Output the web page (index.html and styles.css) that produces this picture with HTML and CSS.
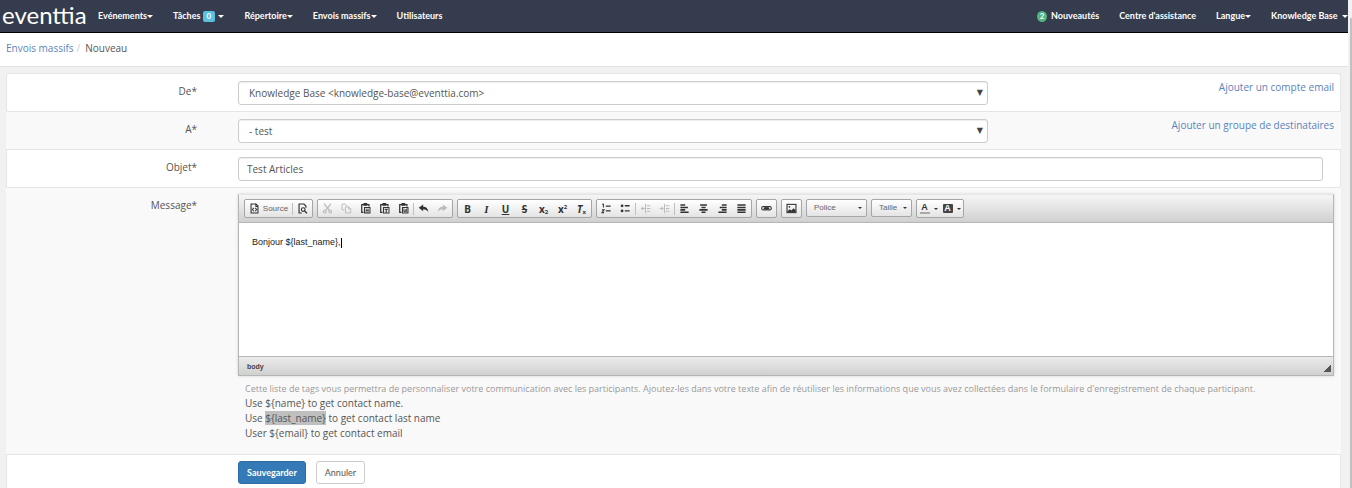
FILE: index.html
```
<!DOCTYPE html>
<html lang="fr">
<head>
  <meta charset="UTF-8"/>
  <meta name="viewport" content="width=device-width,initial-scale=1"/>
  <title>Nouveau - Envois massifs</title>
  <link rel="stylesheet" href="styles.css">
</head>
<body>

  <!-- Icon set -->
  <svg class="sprite" aria-hidden="true">
    <symbol id="i-source" viewBox="0 0 16 16"><path d="M3 1.5h7l3 3v10H3z" fill="none" stroke="currentColor" stroke-width="1.6"/><path d="M10 1v4h3M7 7L5 9.500l2 2.500M9 7l2 2.500L9 12" fill="none" stroke="currentColor" stroke-width="1.500"/></symbol>
    <symbol id="i-preview" viewBox="0 0 16 16"><path d="M7 14.500H3v-13h7l3 3V7" fill="none" stroke="currentColor" stroke-width="1.700"/><circle cx="9" cy="9.500" r="2.700" fill="none" stroke="currentColor" stroke-width="1.600"/><path d="M11 11.500l3.500 3.500" stroke="currentColor" stroke-width="2"/></symbol>
    <symbol id="i-cut" viewBox="0 0 16 16"><path d="M3 1l8 10M13 1L5 11" stroke="currentColor" stroke-width="2"/><circle cx="4" cy="12.500" r="2" fill="none" stroke="currentColor" stroke-width="1.700"/><circle cx="12" cy="12.500" r="2" fill="none" stroke="currentColor" stroke-width="1.700"/></symbol>
    <symbol id="i-copy" viewBox="0 0 16 16"><path d="M5 10H1.500V1.500H6L8.500 4M6.500 5.500H11l3 3v6H6.500z M11 5.500v3h3" fill="none" stroke="currentColor" stroke-width="1.400"/></symbol>
    <symbol id="i-paste" viewBox="0 0 16 16"><path d="M5 13.500H2.500v-11H13V5" fill="none" stroke="currentColor" stroke-width="1.800"/><path d="M5 0h5.500v4H5z" fill="currentColor"/><path d="M6.500 6.500h8v8h-8z" fill="none" stroke="currentColor" stroke-width="1.500"/><path d="M8 9h5M8 11h5M8 13h5" stroke="currentColor" stroke-width="1.200"/></symbol>
    <symbol id="i-pastetext" viewBox="0 0 16 16"><path d="M5 13.500H2.500v-11H13V5" fill="none" stroke="currentColor" stroke-width="1.800"/><path d="M5 0h5.500v4H5z" fill="currentColor"/><path d="M6.500 6.500h8v8h-8z" fill="none" stroke="currentColor" stroke-width="1.500"/><path d="M8 9h5M10.500 9v5" stroke="currentColor" stroke-width="1.600"/></symbol>
    <symbol id="i-pasteword" viewBox="0 0 16 16"><path d="M5 13.500H2.500v-11H13V5" fill="none" stroke="currentColor" stroke-width="1.800"/><path d="M5 0h5.500v4H5z" fill="currentColor"/><path d="M6.500 6.500h8v8h-8z" fill="none" stroke="currentColor" stroke-width="1.500"/><path d="M8.500 8v4.500h4V8M10.500 9v3" fill="none" stroke="currentColor" stroke-width="1.300"/></symbol>
    <symbol id="i-undo" viewBox="0 0 16 16"><path d="M1 7l6.500-5v3.300c4.500 0 7 2.700 7.500 7.700-2-2.800-4-4-7.500-4V12z" fill="currentColor"/></symbol>
    <symbol id="i-redo" viewBox="0 0 16 16"><path d="M15 7L8.500 2v3.300C4 5.300 1.500 8 1 13c2-2.800 4-4 7.500-4v3z" fill="currentColor"/></symbol>
    <symbol id="i-ol" viewBox="0 0 16 16"><path d="M3.500 1v5.500M2 2.500L3.500 1M1.500 10h3l-3 4h3" fill="none" stroke="currentColor" stroke-width="1.500"/><path d="M7 4.500h7M7 11.500h7" stroke="currentColor" stroke-width="2"/></symbol>
    <symbol id="i-ul" viewBox="0 0 16 16"><circle cx="3" cy="4" r="2" fill="currentColor"/><circle cx="3" cy="11.500" r="2" fill="currentColor"/><path d="M7 4h7M7 11.500h7" stroke="currentColor" stroke-width="2"/></symbol>
    <symbol id="i-outdent" viewBox="0 0 16 16"><path d="M8 1v14M10 4h5M10 8h5M10 12h5M3 8h4" stroke="currentColor" stroke-width="1.500"/><path d="M4.500 5v6L1 8z" fill="currentColor"/></symbol>
    <symbol id="i-indent" viewBox="0 0 16 16"><path d="M8 1v14M10 4h5M10 8h5M10 12h5M1 8h4" stroke="currentColor" stroke-width="1.500"/><path d="M3.500 5v6L7 8z" fill="currentColor"/></symbol>
    <symbol id="i-left" viewBox="0 0 16 16"><path d="M2 3h7M2 6.500h11M2 10h7M2 13.500h12" stroke="currentColor" stroke-width="2.300"/></symbol>
    <symbol id="i-center" viewBox="0 0 16 16"><path d="M3 3h10M5 6.500h6M2 10h12M5 13.500h6" stroke="currentColor" stroke-width="2.300"/></symbol>
    <symbol id="i-right" viewBox="0 0 16 16"><path d="M7 3h7M4 6.500h10M7 10h7M2 13.500h12" stroke="currentColor" stroke-width="2.300"/></symbol>
    <symbol id="i-justify" viewBox="0 0 16 16"><path d="M2 3h12M2 6.500h12M2 10h12M2 13.500h12" stroke="currentColor" stroke-width="2.300"/></symbol>
    <symbol id="i-link" viewBox="0 0 16 16"><rect x="1" y="5" width="8" height="5" rx="2.500" fill="none" stroke="currentColor" stroke-width="1.600"/><rect x="7" y="5" width="8" height="5" rx="2.500" fill="none" stroke="currentColor" stroke-width="1.600"/><path d="M4 7.500h8" stroke="currentColor" stroke-width="2.500"/></symbol>
    <symbol id="i-image" viewBox="0 0 16 16"><rect x="1.500" y="2" width="13" height="12" fill="none" stroke="currentColor" stroke-width="1.600"/><path d="M2 12l3.500-3 2.500 2 3-3.500 3 3V13H2z" fill="currentColor"/><circle cx="5" cy="5.500" r="1.300" fill="currentColor"/></symbol>
  </svg>

  <header class="navbar">
    <a class="brand" href="#">eventtia</a>
    <nav class="menu">
      <a href="#">Evénements<i class="caret"></i></a>
      <a href="#">Tâches <span class="badge">0</span> <i class="caret"></i></a>
      <a href="#">Répertoire<i class="caret"></i></a>
      <a href="#">Envois massifs<i class="caret"></i></a>
      <a href="#">Utilisateurs</a>
    </nav>
    <nav class="menu menu-right">
      <a href="#"><span class="news">2</span>Nouveautés</a>
      <a href="#">Centre d'assistance</a>
      <a href="#">Langue<i class="caret"></i></a>
      <a href="#">Knowledge Base &nbsp;<i class="caret"></i></a>
    </nav>
  </header>

  <nav class="breadcrumb">
    <a href="#">Envois massifs</a><span class="slash">/</span><span>Nouveau</span>
  </nav>

  <form class="panel" onsubmit="return false">
    <div class="row">
      <label for="from">De*</label>
      <div class="field">
        <div class="select">
          <select id="from"><option>Knowledge Base &lt;knowledge-base@eventtia.com&gt;</option></select>
        </div>
        <a class="add" href="#">Ajouter un compte email</a>
      </div>
    </div>

    <div class="row alt">
      <label for="to">A*</label>
      <div class="field">
        <div class="select">
          <select id="to"><option>- test</option></select>
        </div>
        <a class="add" href="#">Ajouter un groupe de destinataires</a>
      </div>
    </div>

    <div class="row">
      <label for="subject">Objet*</label>
      <div class="field">
        <input type="text" id="subject" value="Test Articles"/>
      </div>
    </div>

    <div class="row alt message">
      <label id="messageLabel">Message*</label>
      <div>
        <div class="editor">
          <div class="toolbar">
            <div class="group">
              <button type="button" class="source"><svg><use href="#i-source"/></svg>Source</button>
              <i class="sep"></i>
              <button type="button" title="Aperçu"><svg><use href="#i-preview"/></svg></button>
            </div>
            <div class="group">
              <button type="button" title="Couper" disabled><svg><use href="#i-cut"/></svg></button>
              <button type="button" title="Copier" disabled><svg><use href="#i-copy"/></svg></button>
              <button type="button" title="Coller"><svg><use href="#i-paste"/></svg></button>
              <button type="button" title="Coller comme texte"><svg><use href="#i-pastetext"/></svg></button>
              <button type="button" title="Coller depuis Word"><svg><use href="#i-pasteword"/></svg></button>
              <i class="sep"></i>
              <button type="button" title="Annuler"><svg><use href="#i-undo"/></svg></button>
              <button type="button" title="Rétablir" disabled><svg><use href="#i-redo"/></svg></button>
            </div>
            <div class="group letters">
              <button type="button" title="Gras">B</button>
              <button type="button" title="Italique"><em class="serif">I</em></button>
              <button type="button" title="Souligné"><u>U</u></button>
              <button type="button" title="Barré"><s>S</s></button>
              <button type="button" title="Indice">x<sub>2</sub></button>
              <button type="button" title="Exposant">x<sup>2</sup></button>
              <button type="button" title="Supprimer la mise en forme"><em>T</em><sub>x</sub></button>
            </div>
            <div class="group">
              <button type="button" title="Liste numérotée"><svg><use href="#i-ol"/></svg></button>
              <button type="button" title="Liste à puces"><svg><use href="#i-ul"/></svg></button>
              <i class="sep"></i>
              <button type="button" title="Diminuer le retrait" disabled><svg><use href="#i-outdent"/></svg></button>
              <button type="button" title="Augmenter le retrait" disabled><svg><use href="#i-indent"/></svg></button>
              <i class="sep"></i>
              <button type="button" title="Aligner à gauche"><svg><use href="#i-left"/></svg></button>
              <button type="button" title="Centrer"><svg><use href="#i-center"/></svg></button>
              <button type="button" title="Aligner à droite"><svg><use href="#i-right"/></svg></button>
              <button type="button" title="Justifier"><svg><use href="#i-justify"/></svg></button>
            </div>
            <div class="group">
              <button type="button" title="Lien"><svg><use href="#i-link"/></svg></button>
            </div>
            <div class="group">
              <button type="button" title="Image"><svg><use href="#i-image"/></svg></button>
            </div>
            <button type="button" class="combo font">Police<i class="caret"></i></button>
            <button type="button" class="combo size">Taille<i class="caret"></i></button>
            <div class="group">
              <button type="button" class="color" title="Couleur de texte"><b class="ink">A</b><i class="caret"></i></button>
              <button type="button" class="color" title="Couleur d'arrière-plan"><b class="fill">A</b><i class="caret"></i></button>
            </div>
          </div>
          <div class="content" contenteditable="true" role="textbox" aria-labelledby="messageLabel" spellcheck="false">Bonjour ${last_name},<span class="cursor"></span></div>
          <div class="status"><span>body</span><i class="grip"></i></div>
        </div>
        <div class="help">
          <p class="hint">Cette liste de tags vous permettra de personnaliser votre communication avec les participants. Ajoutez-les dans votre texte afin de réutiliser les informations que vous avez collectées dans le formulaire d'enregistrement de chaque participant.</p>
          <p>Use ${name} to get contact name.</p>
          <p>Use <mark>${last_name}</mark> to get contact last name</p>
          <p>User ${email} to get contact email</p>
        </div>
      </div>
    </div>

    <div class="row actions">
      <div class="buttons">
        <button type="submit" class="btn primary">Sauvegarder</button>
        <button type="button" class="btn">Annuler</button>
      </div>
    </div>
  </form>

  <div class="scrollbar" aria-hidden="true"></div>
</body>
</html>
```
FILE: styles.css
```
*{box-sizing:border-box}
body{font-family:"Open Sans",sans-serif;font-size:10px;line-height:15px;color:#555;background:#f1f1f1;
     margin:0;padding-right:4px;min-height:100vh;display:flex;flex-direction:column}
a{color:#5b84b9;text-decoration:none}
p{margin:0}
button,input,select{font-family:inherit;font-size:inherit;color:inherit;margin:0}
.sprite{display:none}
.caret{display:inline-block;border:3px solid transparent;border-top-color:currentColor;border-bottom:0;vertical-align:middle}

/* top bar */
.navbar{display:flex;align-items:center;min-height:33px;background:#353c4d;border-bottom:1px solid #000;padding-left:2px;
        white-space:nowrap}
.brand{font-family:Lato,sans-serif;font-size:24px;line-height:29px;color:#fff;width:96px;padding-bottom:3px}
.menu{display:flex;gap:20px;font-family:Lato,sans-serif;font-size:9px;font-weight:700;padding-bottom:2px}
.menu a{color:#fff}
.menu-right{margin-left:auto}
.badge{display:inline-block;background:#5bc0de;border-radius:2px;padding:0 4px;line-height:11px;font-size:8px;margin-right:1px}
.news{display:inline-block;width:10px;height:11px;border-radius:50%;background:#51b37f;font-size:8px;line-height:11px;
      text-align:center;margin-right:4px}

.breadcrumb{background:#fff;border-bottom:1px solid #e2e2e2;padding:8px 6px 10px}
.slash{color:#ccc;padding:0 5px 0 3px}

/* form */
.panel{margin:6px 7px 0 6px;flex:1;display:flex;flex-direction:column}
.row{display:grid;grid-template-columns:190px 1fr;column-gap:41px;background:#fff;border:1px solid #e5e5e5;border-bottom:0;
     padding:7px 6px 6px 0}
.row.alt{background:#f9f9f9;border-left-color:#f9f9f9;border-right-color:#f9f9f9}
.row:first-child{border-radius:3px 3px 0 0}
.row label{text-align:right;line-height:20px}
.field{display:flex}
.select{flex:13;position:relative}
.select::after{content:"▼";position:absolute;right:5px;top:5px;line-height:14px;font-family:"DejaVu Sans",sans-serif;font-size:8px;
               color:#444;pointer-events:none}
select,input{width:100%;height:24px;padding:0 8px;background:#fff;border:1px solid #ccc;border-radius:3px;
             box-shadow:inset 0 1px 1px rgba(0,0,0,.07)}
select{appearance:none;padding:0 10px}
input{margin-right:11px}
.add{flex:6;text-align:right;line-height:13px}
.row.message{padding-top:6px;padding-bottom:13px}
.row.message label{line-height:22px}

/* message editor */
.editor{border:1px solid #b6b6b6;border-top-color:#e5e5e5;box-shadow:0 0 3px rgba(0,0,0,.15);background:#fff}
.toolbar{display:flex;align-items:flex-start;gap:4px;min-height:28px;padding:4px 5px;background:linear-gradient(#f5f5f5,#cfd1cf);
         border-bottom:1px solid #b6b6b6;font-family:"Liberation Sans",sans-serif;font-size:8px}
.toolbar button{display:flex;align-items:center;justify-content:center;width:19px;height:17px;padding:0;border:0;
                background:none;color:#333;line-height:12px}
.toolbar button:disabled{color:#bbb}
.toolbar svg{width:11px;height:11px}
.group{display:flex;align-items:center;border:1px solid #a6a6a6;border-radius:2px;background:linear-gradient(#fff,#e4e4e4)}
.sep{width:1px;height:12px;background:#c0c0c0}
.toolbar .source{width:47px;gap:3px;color:#666}
.source svg{color:#333}
.letters button{font-family:"Noto Sans",sans-serif;font-size:10px;font-weight:700}
.letters sub,.letters sup{font-size:6px;line-height:6px}
.letters sub{align-self:flex-end;padding-bottom:2px}
.letters sup{align-self:flex-start;padding-top:4px}
.serif{font-family:"Liberation Serif",serif;font-size:11px}
.toolbar .combo{height:18px;justify-content:space-between;padding:0 4px 0 7px;border:1px solid #a6a6a6;border-radius:2px;
                background:linear-gradient(#fff,#e4e4e4);color:#666}
.toolbar .font{width:61px}
.toolbar .size{width:41px}
.combo .caret,.color .caret{border-width:2px;border-bottom:0;color:#333}
.toolbar .color{width:23px;gap:4px}
.ink,.fill{width:10px;font-size:9px;line-height:9px}
.ink{border-bottom:2px solid #aaa}
.fill{background:#444;color:#fff;border-radius:1px}
.content{min-height:133px;padding:12px 13px;font-family:"Liberation Sans",sans-serif;font-size:9px;line-height:14px;color:#222;outline:0}
.cursor{display:inline-block;width:1px;height:10px;background:#000;vertical-align:middle}
.status{display:flex;justify-content:space-between;align-items:center;height:19px;padding:0 2px 0 8px;border-top:1px solid #b6b6b6;
        background:linear-gradient(#ebebeb,#cfd1cf);font-family:"Liberation Sans",sans-serif;font-size:7px;font-weight:700;color:#444}
.grip{align-self:flex-end;margin-bottom:3px;width:7px;height:7px;background:linear-gradient(135deg,transparent 50%,#555 50%)}
.help{padding:5px 7px 0}
.hint{font-size:9px;color:#999}
mark{background:#bfbfbf;color:inherit}

.actions{flex:1;padding-top:6px;padding-bottom:0}
.buttons{grid-column:2;display:flex;align-items:flex-start;gap:10px}
.btn{height:23px;padding:0 8px;font-family:Lato,sans-serif;font-size:9px;background:#fff;border:1px solid #ccc;border-radius:3px}
.primary{background:#337ab7;border-color:#2e6da4;color:#fff;font-weight:700}

.scrollbar{position:fixed;top:18px;right:0;bottom:0;width:2px;background:#c1c1c1}
```
